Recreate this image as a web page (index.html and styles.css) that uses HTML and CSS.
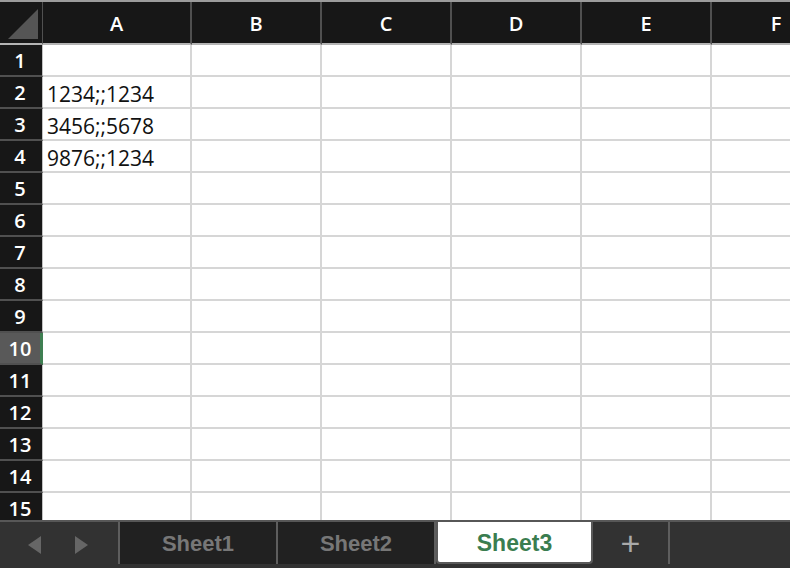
FILE: index.html
```html
<html>
<head>
    <link rel="stylesheet" href="styles.css">
</head>
<body>
    <div class="sheet">
        <div class="grid">
            <div class="corner"><div class="corner-tri"></div></div>
            <div class="col-head col-a">A</div>
            <div class="col-head">B</div>
            <div class="col-head">C</div>
            <div class="col-head">D</div>
            <div class="col-head">E</div>
            <div class="col-head">F</div>

            <div class="row-head">1</div><div class="cell"></div><div class="cell"></div><div class="cell"></div><div class="cell"></div><div class="cell"></div><div class="cell"></div>
            <div class="row-head">2</div><div class="cell">1234;;1234</div><div class="cell"></div><div class="cell"></div><div class="cell"></div><div class="cell"></div><div class="cell"></div>
            <div class="row-head">3</div><div class="cell">3456;;5678</div><div class="cell"></div><div class="cell"></div><div class="cell"></div><div class="cell"></div><div class="cell"></div>
            <div class="row-head">4</div><div class="cell">9876;;1234</div><div class="cell"></div><div class="cell"></div><div class="cell"></div><div class="cell"></div><div class="cell"></div>
            <div class="row-head">5</div><div class="cell"></div><div class="cell"></div><div class="cell"></div><div class="cell"></div><div class="cell"></div><div class="cell"></div>
            <div class="row-head">6</div><div class="cell"></div><div class="cell"></div><div class="cell"></div><div class="cell"></div><div class="cell"></div><div class="cell"></div>
            <div class="row-head">7</div><div class="cell"></div><div class="cell"></div><div class="cell"></div><div class="cell"></div><div class="cell"></div><div class="cell"></div>
            <div class="row-head">8</div><div class="cell"></div><div class="cell"></div><div class="cell"></div><div class="cell"></div><div class="cell"></div><div class="cell"></div>
            <div class="row-head">9</div><div class="cell"></div><div class="cell"></div><div class="cell"></div><div class="cell"></div><div class="cell"></div><div class="cell"></div>
            <div class="row-head active">10</div><div class="cell"></div><div class="cell"></div><div class="cell"></div><div class="cell"></div><div class="cell"></div><div class="cell"></div>
            <div class="row-head">11</div><div class="cell"></div><div class="cell"></div><div class="cell"></div><div class="cell"></div><div class="cell"></div><div class="cell"></div>
            <div class="row-head">12</div><div class="cell"></div><div class="cell"></div><div class="cell"></div><div class="cell"></div><div class="cell"></div><div class="cell"></div>
            <div class="row-head">13</div><div class="cell"></div><div class="cell"></div><div class="cell"></div><div class="cell"></div><div class="cell"></div><div class="cell"></div>
            <div class="row-head">14</div><div class="cell"></div><div class="cell"></div><div class="cell"></div><div class="cell"></div><div class="cell"></div><div class="cell"></div>
            <div class="row-head">15</div><div class="cell"></div><div class="cell"></div><div class="cell"></div><div class="cell"></div><div class="cell"></div><div class="cell"></div>
        </div>
    </div>

    <div class="tabbar">
        <div class="nav">
            <svg width="16" height="18" viewBox="0 0 16 18"><polygon points="14,0 14,18 1,9" fill="#666"/></svg>
            <svg width="16" height="18" viewBox="0 0 16 18"><polygon points="2,0 2,18 15,9" fill="#666"/></svg>
        </div>
        <div class="tab">Sheet1</div>
        <div class="tab">Sheet2</div>
        <div class="tab tab-active">Sheet3</div>
        <div class="tab-add">+</div>
        <div class="tab-rest"></div>
    </div>
</body>
</html>
```

FILE: styles.css
```css
:root {
    --head-bg: #171717;
    --head-line: #505050;
    --cell-line: #d6d6d6;
    --bar-bg: #323232;
}

* {
    box-sizing: border-box;
    margin: 0px;
    padding: 0px;
}

body {
    width: 790px;
    height: 568px;
    overflow: hidden;
    background-color: #fff;
    font-family: "Open Sans", "Liberation Sans", sans-serif;
    display: flex;
    flex-direction: column;
}

.sheet {
    flex: 1;
    overflow: hidden;
    border-top: 2px solid #9c9c9c;
}

.grid {
    display: grid;
    grid-template-columns: 43px 149px repeat(5, 130px);
    grid-template-rows: 43px;
    grid-auto-rows: 32px;
    width: 900px;
}

.corner {
    background-color: var(--head-bg);
    border-right: 1px solid var(--head-line);
    border-bottom: 2px solid #b4b4b4;
    position: relative;
}

.corner-tri {
    position: absolute;
    right: 4px;
    bottom: 4px;
    width: 0;
    height: 0;
    border-left: 30px solid transparent;
    border-bottom: 30px solid #555;
}

.col-head {
    background-color: var(--head-bg);
    color: #fff;
    font-size: 20px;
    font-weight: 600;
    border-right: 2px solid var(--head-line);
    border-bottom: 2px solid #b4b4b4;

    display: flex;
    align-items: center;
    justify-content: center;
    padding-top: 1px;
}

.row-head {
    background-color: var(--head-bg);
    color: #fff;
    font-size: 20px;
    font-weight: 600;
    border-right: 1px solid #c2c2c2;
    border-bottom: 2px solid var(--head-line);

    display: flex;
    align-items: center;
    justify-content: center;
    padding-right: 2px;
}

.row-head.active {
    background-color: #595959;
    border-right: 3px solid #3f7f52;
    padding-right: 0px;
}

.cell {
    border-right: 2px solid var(--cell-line);
    border-bottom: 2px solid var(--cell-line);
    font-size: 21px;
    color: #111;
    padding-left: 4px;
    padding-top: 3px;
    white-space: nowrap;
}

.tabbar {
    height: 48px;
    flex-shrink: 0;
    background-color: var(--bar-bg);
    border-top: 2px solid #575757;
    display: flex;
    font-family: "Liberation Sans", Arial, sans-serif;
}

.nav {
    width: 120px;
    display: flex;
    align-items: center;
    gap: 30px;
    padding-left: 27px;
    border-right: 2px solid #5e5e5e;
    margin-bottom: 4px;
    padding-top: 4px;
}

.tab {
    width: 158px;
    background-color: #212121;
    color: #777;
    font-size: 22px;
    font-weight: bold;
    display: flex;
    align-items: center;
    justify-content: center;
    padding-top: 2px;
    border-right: 2px solid #5e5e5e;
    margin-bottom: 4px;
}

.tab-active {
    width: 157px;
    background-color: #fff;
    color: #3a7d4f;
    font-size: 23px;
    border: 2px solid #5a5a5a;
    border-top: none;
    border-radius: 0 0 4px 4px;
}

.tab-add {
    width: 77px;
    color: #aaa;
    font-size: 34px;
    display: flex;
    align-items: center;
    justify-content: center;
    border-right: 2px solid #5e5e5e;
    margin-bottom: 4px;
}

.tab-rest {
    flex: 1;
}
```
